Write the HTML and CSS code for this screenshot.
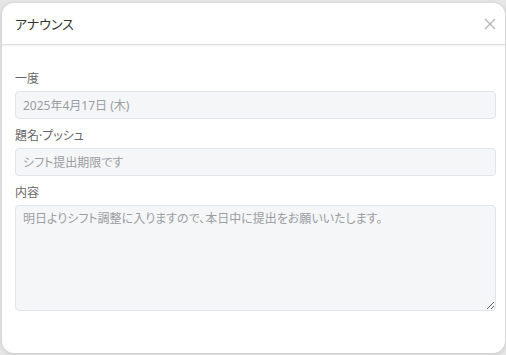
FILE: index.html
```html
<!DOCTYPE html>
<html>
<head>
<meta charset="utf-8">
<title>アナウンス</title>
<link rel="stylesheet" href="styles.css">
</head>
<body>

<div class="modal">
  <div class="modal-header">
    <h2 class="modal-title">アナウンス</h2>
    <button class="close-btn" aria-label="閉じる">
      <svg width="12" height="12" viewBox="0 0 12 12"><path d="M1 1L11 11M11 1L1 11" stroke="#b4b4b4" stroke-width="1.4" fill="none"/></svg>
    </button>
  </div>
  <div class="modal-body">
    <label class="field-label">一度</label>
    <input class="field-input" type="text" value="2025年4月17日 (木)" readonly>
    <label class="field-label">題名·プッシュ</label>
    <input class="field-input" type="text" value="シフト提出期限です" readonly>
    <label class="field-label">内容</label>
    <textarea class="field-textarea" readonly>明日よりシフト調整に入りますので、本日中に提出をお願いいたします。</textarea>
  </div>
</div>

</body>
</html>
```

FILE: styles.css
```css
body {
  margin: 0;
  padding: 3px 1px 2px 2px;
  background: #e6e6e7;
  font-family: "Noto Sans", "Noto Sans CJK JP", sans-serif;
  font-feature-settings: "palt";
  height: 355px;
  box-sizing: border-box;
}

.modal {
  background: #ffffff;
  border-radius: 12px;
  box-shadow: 0 1px 4px rgba(0, 0, 0, 0.15);
  height: 350px;
  box-sizing: border-box;
}

.modal-header {
  display: flex;
  justify-content: space-between;
  align-items: center;
  height: 41px;
  padding: 0 7px 0 13px;
  border-bottom: 1px solid #dcdcdc;
  box-shadow: 0 1px 2px rgba(0, 0, 0, 0.06);
}

.modal-title {
  margin: 0;
  font-size: 13px;
  font-weight: normal;
  color: #333;
}

.close-btn {
  border: none;
  background: none;
  padding: 0;
  width: 16px;
  height: 16px;
  display: flex;
  align-items: center;
  justify-content: center;
  cursor: pointer;
}

.modal-body {
  display: flex;
  flex-direction: column;
  padding: 25px 9px 0 13px;
}

.field-label {
  font-size: 12px;
  color: #666;
  line-height: 18px;
  margin-bottom: 3px;
}

.field-input,
.field-textarea {
  font-family: inherit;
  font-feature-settings: "palt";
  font-size: 12px;
  color: #9a9da2;
  background: #f5f6f8;
  border: 1px solid #e1e4e8;
  border-radius: 4px;
  padding: 0 7px;
  box-sizing: border-box;
  width: 100%;
  outline: none;
}

.field-input {
  height: 28px;
  margin-bottom: 8px;
}

.field-textarea {
  height: 106px;
  padding-top: 4px;
  line-height: 18px;
  resize: vertical;
}
```
